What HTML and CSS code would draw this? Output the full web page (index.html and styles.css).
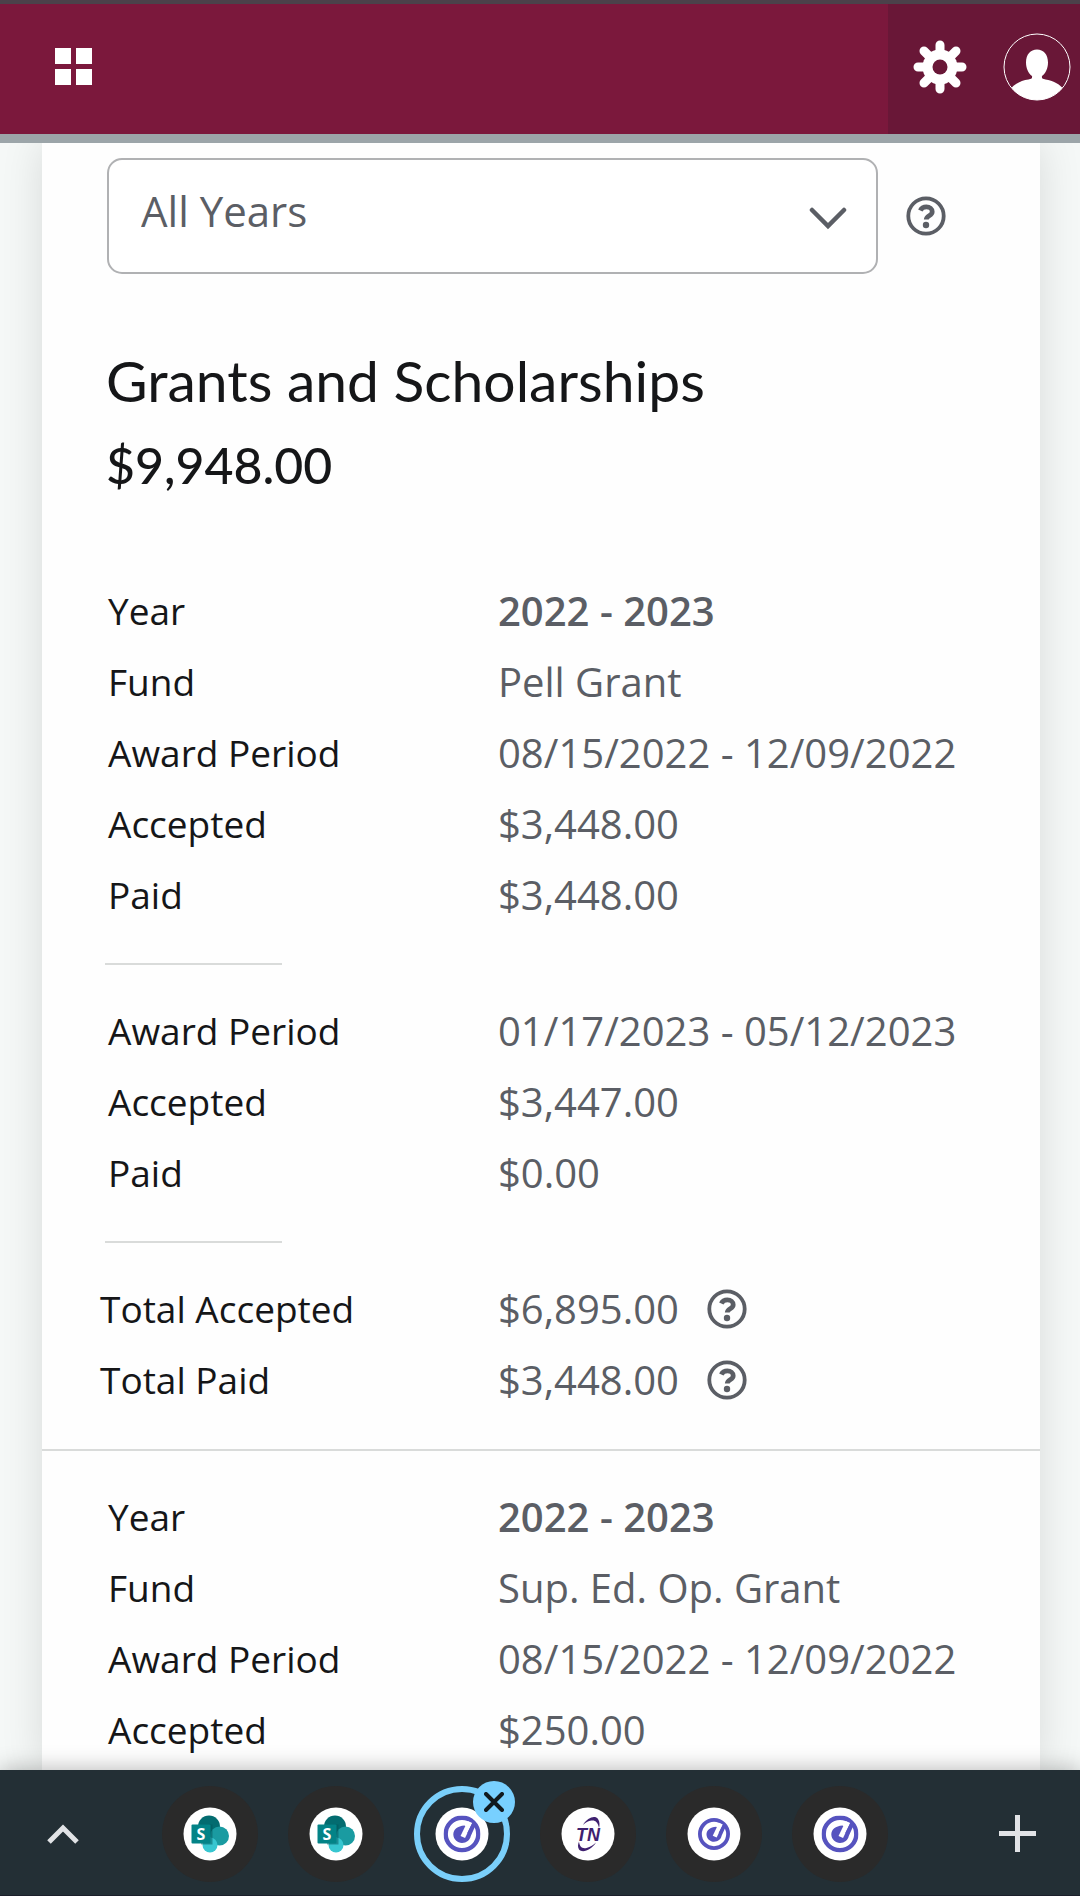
FILE: index.html
```html
<!DOCTYPE html>
<html lang="en">
  <head>
    <meta charset="UTF-8" />
    <meta name="viewport" content="width=device-width, initial-scale=1.0" />
    <title>Grants and Scholarships</title>
    <link rel="stylesheet" href="styles.css">
  </head>
  <body>
    <!-- shared icons -->
    <svg class="sprite" aria-hidden="true">
      <symbol id="help" viewBox="0 0 40 40">
        <circle cx="20" cy="20" r="17.7" fill="none" stroke="currentColor" stroke-width="3.8" />
        <path d="M14.3 14.6C15.6 11.8 18 10.9 20.4 10.9C23.8 10.9 26.2 12.9 26.2 15.7C26.2 20 20.3 19.6 20.3 23.6" fill="none" stroke="currentColor" stroke-width="4.8" />
        <circle cx="20" cy="29" r="3.2" fill="currentColor" />
      </symbol>
      <symbol id="sharepoint" viewBox="0 0 54 54">
        <circle cx="27" cy="27" r="26.5" fill="#fff" />
        <circle cx="26" cy="19.5" r="11" fill="#036c70" />
        <circle cx="36.5" cy="29" r="9.5" fill="#1a9ba1" />
        <circle cx="27" cy="38" r="7.5" fill="#37c6d0" />
        <path d="M18 17.5h11.5v20H18z" fill="#025459" opacity=".5" />
        <rect x="8.5" y="17.5" width="19" height="19" rx="1" fill="#038387" />
        <text x="18" y="32.5" text-anchor="middle" class="logo-s">S</text>
      </symbol>
      <symbol id="ellucian" viewBox="0 0 37 37">
        <circle cx="18.5" cy="18.5" r="16.3" fill="none" stroke="#5653bf" stroke-width="4.4" />
        <path d="M21 10C14 10.5 9.800 14 9.800 19C10 24 14 27.400 18.500 27.400C23 27.400 26.500 24.500 27.300 20.500L32 10L28 7L24 12Z" fill="#5653bf" />
        <path d="M26.5 6.500L19.3 21.5" stroke="#fff" stroke-width="5" />
        <path d="M29.5 6L32 9.5L27.5 16.5L25 20L24 17Z" fill="#5653bf" />
      </symbol>
      <symbol id="tn" viewBox="0 0 54 54">
        <circle cx="27" cy="27" r="26.5" fill="#fff" />
        <path d="M22 18C26.5 10.5 34 8 37 12C39 15 38.7 18.5 38 21C37 15.5 34.5 13 30.5 13.5C27 14 24.5 15.5 22 18Z" fill="#3f2170" />
        <path d="M35 35.5C30.5 43 21.5 46.5 18 42.5C16.5 40 16.8 37.5 18 34.5C18.5 39.5 21 42 25.5 41C29.5 40 32.5 38 35 35.5Z" fill="#3f2170" />
        <text x="27" y="33.5" text-anchor="middle" class="logo-tn">TN</text>
      </symbol>
    </svg>

    <header class="topbar">
      <button class="icon-button apps" aria-label="Apps">
        <svg width="37" height="37" viewBox="0 0 37 37" fill="#fff">
          <path d="M0 0h16v16H0zM21 0h16v16H21zM0 21h16v16H0zM21 21h16v16H21z" />
        </svg>
      </button>
      <div class="account">
        <button class="icon-button" aria-label="Settings">
          <svg width="54" height="54" viewBox="-27 -27 54 54">
            <g stroke="#fff" stroke-width="9" stroke-linecap="round">
              <path d="M0-22V22M-22 0H22M-16-16L16 16M16-16L-16 16" />
            </g>
            <circle r="17.5" fill="#fff" />
            <circle r="7.5" fill="#691737" />
          </svg>
        </button>
        <button class="icon-button" aria-label="Profile">
          <svg width="68" height="68" viewBox="0 0 68 68">
            <clipPath id="avatar"><circle cx="34" cy="34" r="33" /></clipPath>
            <g clip-path="url(#avatar)" fill="#fff">
              <path d="M34 16.5C40.5 16.5 45 21.5 45 29.5C45 35.5 42.5 40.5 39 43C38.5 45.5 39.5 46 42.5 46.5C50 47.5 57 51 61 57L58 68H10L7 57C11 51 18 47.5 25.5 46.5C28.5 46 29.5 45.5 29 43C25.5 40.5 23 35.5 23 29.5C23 21.5 27.5 16.5 34 16.5Z" />
            </g>
            <circle cx="34" cy="34" r="33" fill="none" stroke="#fff" stroke-width="1" />
          </svg>
        </button>
      </div>
    </header>

    <main class="page">
      <div class="card">
        <div class="filter">
          <div class="select-box">
            <select aria-label="Award year">
              <option>All Years</option>
            </select>
            <svg class="chevron" width="38" height="24" viewBox="0 0 38 24">
              <path d="M3 3L19 19L35 3" fill="none" stroke="#5b5e65" stroke-width="4.5" stroke-linecap="round" />
            </svg>
          </div>
          <button class="help" aria-label="Help with award years"><svg><use href="#help" /></svg></button>
        </div>

        <h1>Grants and Scholarships</h1>
        <p class="amount">$9,948.00</p>

        <section class="fund">
          <dl>
            <dt>Year</dt><dd class="bold">2022 - 2023</dd>
            <dt>Fund</dt><dd>Pell Grant</dd>
            <dt>Award Period</dt><dd>08/15/2022 - 12/09/2022</dd>
            <dt>Accepted</dt><dd>$3,448.00</dd>
            <dt>Paid</dt><dd>$3,448.00</dd>
          </dl>
          <hr>
          <dl>
            <dt>Award Period</dt><dd>01/17/2023 - 05/12/2023</dd>
            <dt>Accepted</dt><dd>$3,447.00</dd>
            <dt>Paid</dt><dd>$0.00</dd>
          </dl>
          <hr>
          <dl class="totals">
            <dt>Total Accepted</dt>
            <dd>$6,895.00 <button class="help" aria-label="Help with total accepted"><svg><use href="#help" /></svg></button></dd>
            <dt>Total Paid</dt>
            <dd>$3,448.00 <button class="help" aria-label="Help with total paid"><svg><use href="#help" /></svg></button></dd>
          </dl>
        </section>

        <section class="fund">
          <dl>
            <dt>Year</dt><dd class="bold">2022 - 2023</dd>
            <dt>Fund</dt><dd>Sup. Ed. Op. Grant</dd>
            <dt>Award Period</dt><dd>08/15/2022 - 12/09/2022</dd>
            <dt>Accepted</dt><dd>$250.00</dd>
          </dl>
        </section>
      </div>
    </main>

    <nav class="tabbar">
      <button class="icon-button end" aria-label="Expand tabs">
        <svg width="32" height="20" viewBox="0 0 32 20">
          <path d="M2 18L16 4L30 18" fill="none" stroke="#e1e3e6" stroke-width="5" />
        </svg>
      </button>
      <div class="tabs">
        <button class="tab" aria-label="SharePoint"><svg><use href="#sharepoint" /></svg></button>
        <button class="tab" aria-label="SharePoint"><svg><use href="#sharepoint" /></svg></button>
        <div class="tab-group">
          <button class="tab active" aria-label="Self-Service">
            <svg viewBox="0 0 54 54"><circle cx="27" cy="27" r="26.5" fill="#fff" /><use href="#ellucian" x="8.5" y="8.5" width="37" height="37" /></svg>
          </button>
          <button class="close" aria-label="Close tab">
            <svg width="20" height="20" viewBox="0 0 20 20">
              <path d="M2 2L18 18M18 2L2 18" stroke="#111a1f" stroke-width="4" stroke-linecap="round" />
            </svg>
          </button>
        </div>
        <button class="tab" aria-label="TN"><svg><use href="#tn" /></svg></button>
        <button class="tab" aria-label="Self-Service">
          <svg viewBox="0 0 54 54"><circle cx="27" cy="27" r="26.5" fill="#fff" /><use href="#ellucian" x="11" y="11" width="32" height="32" /></svg>
        </button>
        <button class="tab" aria-label="Self-Service">
          <svg viewBox="0 0 54 54"><circle cx="27" cy="27" r="26.5" fill="#fff" /><use href="#ellucian" x="8.5" y="8.5" width="37" height="37" /></svg>
        </button>
      </div>
      <button class="icon-button end" aria-label="New tab">
        <svg width="37" height="37" viewBox="0 0 37 37">
          <path d="M18.5 0V37M0 18.5H37" stroke="#e1e3e6" stroke-width="5" />
        </svg>
      </button>
    </nav>
  </body>
</html>
```
FILE: styles.css
```css
* {
  box-sizing: border-box;
}
body {
  display: flex;
  flex-direction: column;
  height: 100vh;
  margin: 0;
  background-color: #f5f8f7;
  font-family: "Open Sans", sans-serif;
  color: #151618;
  overflow: hidden;
}
button {
  padding: 0;
  border: none;
  background: none;
  cursor: pointer;
}
svg {
  display: block;
}
.sprite {
  display: none;
}

/* header */
.topbar {
  position: relative;
  z-index: 1;
  display: flex;
  flex: none;
  justify-content: space-between;
  height: 143px;
  border-top: 4px solid #4b414a;
  border-bottom: 9px solid #9ca5a9;
  background-color: #7b183c;
}
.icon-button {
  display: flex;
  align-items: center;
  justify-content: center;
}
.apps {
  width: 147px;
  padding-bottom: 5px;
}
.account {
  display: flex;
  align-items: center;
  gap: 36px;
  padding: 0 9px 4px 25px;
  background-color: #691737;
}

/* content */
.page {
  display: flex;
  flex: 1;
  min-height: 0;
  padding: 0 40px 0 42px;
}
.card {
  flex: 1;
  padding-top: 15px;
  background-color: #fefefe;
  box-shadow: 0 0 40px rgba(0, 0, 0, 0.12);
}
.filter {
  display: flex;
  align-items: center;
  gap: 28px;
  padding: 0 94px 0 65px;
}
.select-box {
  position: relative;
  flex: 1;
}
select {
  display: block;
  width: 100%;
  height: 116px;
  padding: 0 80px 11px 32px;
  appearance: none;
  border: 2px solid #b0b1b3;
  border-radius: 15px;
  background: #fff;
  color: #5b5e65;
  font-family: inherit;
  font-size: 42px;
}
.chevron {
  position: absolute;
  top: 49px;
  right: 31px;
  pointer-events: none;
}
.help {
  flex: none;
  color: #5b5e65;
}
.help svg {
  width: 40px;
  height: 40px;
}
h1 {
  margin: 71px 64px 0;
  font-family: Lato, sans-serif;
  font-size: 57px;
  font-weight: 400;
  line-height: 70px;
}
.amount {
  margin: 15px 64px 75px;
  font-family: Lato, sans-serif;
  font-size: 50px;
  font-weight: 500;
  line-height: 70px;
}
.fund + .fund {
  margin-top: 34px;
  padding-top: 30px;
  border-top: 2px solid #d9dbda;
}
dl {
  display: grid;
  grid-template-columns: 390px 1fr;
  grid-auto-rows: 71px;
  align-items: center;
  margin: 0;
  padding-left: 66px;
}
.totals {
  grid-template-columns: 398px 1fr;
  padding-left: 58px;
}
dt {
  font-size: 37px;
}
dd {
  display: flex;
  align-items: center;
  gap: 28px;
  margin: 0;
  color: #5b5e65;
  font-size: 40px;
}
.bold {
  font-weight: 600;
}
hr {
  width: 177px;
  height: 2px;
  margin: 33px 63px 30px;
  border: none;
  background-color: #d9dbda;
}

/* bottom tabs */
.tabbar {
  position: relative;
  display: flex;
  flex: none;
  align-items: center;
  justify-content: space-between;
  height: 126px;
  padding-top: 2px;
  border-bottom: 1px solid #1b1f2b;
  background-color: #232f35;
  box-shadow: 0 0 22px rgba(0, 0, 0, 0.3);
}
.end {
  width: 126px;
  height: 96px;
}
.tabs {
  display: flex;
  flex: 1;
  gap: 30px;
  padding-left: 36px;
}
.tab {
  display: flex;
  align-items: center;
  justify-content: center;
  width: 96px;
  height: 96px;
  border-radius: 50%;
  background-color: #2a2a2a;
}
.tab svg {
  width: 54px;
  height: 54px;
}
.tab.active {
  border: 6px solid #7acffa;
  background-color: #232f35;
}
.tab-group {
  position: relative;
}
.close {
  position: absolute;
  top: -5px;
  right: -5px;
  display: flex;
  align-items: center;
  justify-content: center;
  width: 42px;
  height: 42px;
  border-radius: 50%;
  background-color: #78d0ff;
}
.logo-s {
  fill: #fff;
  font-family: "Open Sans", sans-serif;
  font-size: 16px;
  font-weight: 700;
}
.logo-tn {
  fill: #3f2170;
  font-family: "Liberation Sans", sans-serif;
  font-size: 18px;
  font-style: italic;
  font-weight: 700;
}
```
